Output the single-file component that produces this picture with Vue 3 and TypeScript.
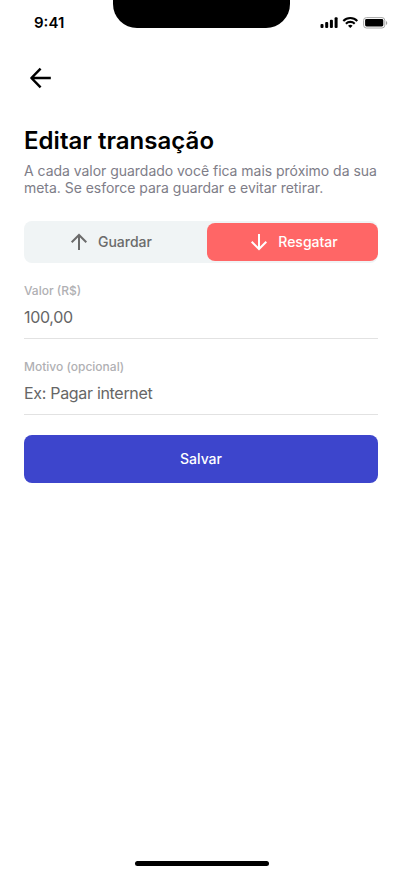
<script setup lang="ts">
import { ref } from 'vue'

type Kind = 'guardar' | 'resgatar'

const kind = ref<Kind>('resgatar')
const amount = ref('100,00')
const reason = ref('')
</script>

<template>
  <div class="screen">
    <header class="status">
      <span class="time">9:41</span>
      <div class="notch"></div>
      <svg class="signals" width="68" height="14" viewBox="0 0 68 14">
        <rect x="0.5" y="8" width="3" height="4" rx="1" />
        <rect x="5.2" y="6" width="3" height="6" rx="1" />
        <rect x="9.9" y="3.7" width="3" height="8.3" rx="1" />
        <rect x="14.6" y="1.2" width="3" height="10.8" rx="1" />
        <g fill="none" stroke="#000" stroke-width="2.1">
          <path d="M23.3 4.9a10 10 0 0 1 14 0" />
          <path d="M25.9 7.7a6.3 6.3 0 0 1 8.8 0" />
        </g>
        <path d="M28 9.7a3.5 3.5 0 0 1 4.6 0L30.3 12z" />
        <rect x="43.6" y="1.6" width="21.2" height="10.4" rx="2.8" fill="none" stroke="#a6a6a6" />
        <rect x="45.1" y="3.1" width="18.2" height="7.4" rx="1.4" />
        <path d="M66 5v4a2.2 2.2 0 0 0 0-4z" fill="#a0a0a0" />
      </svg>
    </header>

    <main class="content">
      <button class="back" type="button" aria-label="Voltar">
        <svg width="32" height="32" viewBox="0 0 32 32" fill="none" stroke="#000" stroke-width="2.5">
          <path d="M26.8 16H7.4M16.6 6.6 7.4 16l9.2 9.4" stroke-linejoin="round" />
        </svg>
      </button>

      <h1>Editar transação</h1>
      <p class="description">A cada valor guardado você fica mais próximo da sua meta. Se esforce para guardar e evitar retirar.</p>

      <div class="toggle">
        <button type="button" class="option" :class="{ active: kind === 'guardar' }" @click="kind = 'guardar'">
          <svg width="24" height="24" viewBox="0 0 24 24"><path d="M12 20V5.5M4.7 12.2 12 5l7.3 7.2" /></svg>
          <span>Guardar</span>
        </button>
        <button type="button" class="option" :class="{ active: kind === 'resgatar' }" @click="kind = 'resgatar'">
          <svg width="24" height="24" viewBox="0 0 24 24"><path d="M12 4v14.5M4.7 11.8 12 19l7.3-7.2" /></svg>
          <span>Resgatar</span>
        </button>
      </div>

      <label class="field">
        <span>Valor (R$)</span>
        <input v-model="amount" type="text" />
      </label>
      <label class="field">
        <span>Motivo (opcional)</span>
        <input v-model="reason" type="text" placeholder="Ex: Pagar internet" />
      </label>

      <button class="save" type="button">Salvar</button>
    </main>

    <div class="home"></div>
  </div>
</template>

<style>
body {
  background: #fff;
}
</style>

<style scoped>
.screen {
  display: flex;
  flex-direction: column;
  box-sizing: border-box;
  height: 874px;
  overflow: hidden;
  background: #fff;
  font-family: Inter, sans-serif;
}

button,
input {
  margin: 0;
  padding: 0;
  border: 0;
  background: none;
  font-family: inherit;
}

.status {
  display: grid;
  grid-template-columns: 113px 177px 112px;
  align-items: start;
  height: 62px;
}

.time {
  padding: 14px 0 0 34px;
  font-size: 15px;
  line-height: 18px;
  font-weight: 600;
}

.notch {
  height: 28px;
  border-radius: 0 0 24px 24px;
  background: #000;
}

.signals {
  margin: 16px 0 0 30px;
}

.content {
  display: flex;
  flex-direction: column;
  flex: 1;
  padding: 0 24px;
}

.back {
  width: 32px;
  height: 32px;
}

.back svg {
  display: block;
}

h1 {
  margin: 32px 0 0;
  font-size: 24px;
  line-height: 29px;
  font-weight: 600;
  letter-spacing: 0.03px;
  color: #000;
}

.description {
  margin: 7px 0 0;
  font-size: 14px;
  line-height: 17px;
  letter-spacing: -0.03px;
  color: #7e7d88;
}

.toggle {
  display: grid;
  grid-template-columns: 171px 171px;
  justify-content: space-between;
  box-sizing: border-box;
  height: 42px;
  margin-top: 25px;
  padding: 2px 0;
  border-radius: 8px;
  background: #f0f4f5;
}

.option {
  display: flex;
  align-items: center;
  justify-content: center;
  gap: 7px;
  border-radius: 8px;
  font-size: 14px;
  font-weight: 500;
  color: #6b6b6b;
}

.option span {
  padding-bottom: 1px;
}

.option svg {
  fill: none;
  stroke: currentColor;
  stroke-width: 2;
}

.option.active {
  background: #ff6666;
  color: #fff;
}

.field {
  display: flex;
  flex-direction: column;
  height: 55px;
  margin-top: 20px;
  border-bottom: 1px solid #e2e2e2;
}

.field span {
  font-size: 12px;
  line-height: 15px;
  font-weight: 500;
  color: #b0b0b3;
}

.field input {
  height: 20px;
  margin-top: 9px;
  font-size: 16px;
  letter-spacing: -0.31px;
  color: #666;
  outline: none;
}

.field input::placeholder {
  color: #666;
  opacity: 1;
}

.save {
  height: 48px;
  margin-top: 20px;
  padding-bottom: 1px;
  border-radius: 8px;
  background: #3d45cc;
  color: #fff;
  font-size: 14px;
  font-weight: 500;
}

.home {
  width: 134px;
  height: 5px;
  margin: 0 133px 8px 135px;
  border-radius: 3px;
  background: #000;
}
</style>
